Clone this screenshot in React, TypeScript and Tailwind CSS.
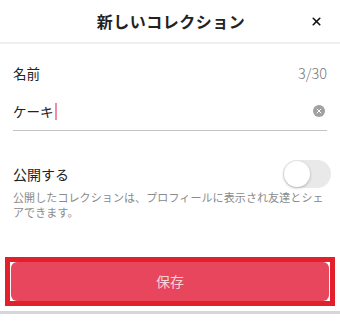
import { X } from 'lucide-react';

const font = { fontFamily: '"Noto Sans CJK JP", "Noto Sans", sans-serif' };

export default function App() {
  return (
    <div className="w-[340px] h-[330px] bg-white overflow-hidden text-[#222]" style={font}>
      {/* header */}
      <div className="h-[42px] grid grid-cols-[48px_1fr_48px] items-center">
        <div />
        <h1 className="text-center text-[16px] font-bold leading-none pl-[2px] tracking-[0.5px]">新しいコレクション</h1>
        <div className="flex justify-end pr-[17px]">
          <X size={13} strokeWidth={3} className="text-[#111]" />
        </div>
      </div>
      <div className="h-[2px] bg-[#efefef]" />

      <div className="px-[13px]">
        {/* name */}
        <div className="mt-[19px] h-[20px] flex items-center justify-between">
          <span className="text-[13.5px]">名前</span>
          <span className="text-[14.5px] text-[#777] font-light">3/30</span>
        </div>
        <div className="mt-[16px] h-[24px] flex items-center justify-between">
          <div className="flex items-center">
            <span className="text-[13.5px]">ケーキ</span>
            <span className="ml-[1px] w-[2px] h-[17px] bg-[#ec8fa6]" />
          </div>
          <span className="mr-[2px] w-[12px] h-[12px] rounded-full bg-[#a0a0a0] flex items-center justify-center">
            <X size={8} strokeWidth={3} className="text-white" />
          </span>
        </div>
        <div className="mt-[7px] h-[1px] bg-[#c4c4c4]" />

        {/* public toggle */}
        <div className="mt-[29px] h-[28px] flex items-center justify-between">
          <span className="text-[14px]">公開する</span>
          <div className="w-[48px] h-[28px] rounded-full bg-[#e9e9ea] p-[1px] -mr-[4px]">
            <div className="w-[26px] h-[26px] rounded-full bg-white shadow-[0_1px_3px_rgba(0,0,0,0.25)]" />
          </div>
        </div>
        <p className="mt-[2px] text-[11px] leading-[15px] tracking-[0.1px] text-[#8a8a8a]">
          公開したコレクションは、プロフィールに表示され友達とシェ
          <br />
          アできます。
        </p>
      </div>

      {/* save */}
      <div className="mt-[37px] mx-[5px] border-[5px] border-[#e41f2c] bg-white px-[1px]">
        <button className="w-full h-[39px] rounded-[6px] bg-[#e8465c] text-[14px] text-[#f9d3d9]">
          保存
        </button>
      </div>
      <div className="mt-[5px] h-[3px] bg-[#d5d5da]" />
    </div>
  );
}
